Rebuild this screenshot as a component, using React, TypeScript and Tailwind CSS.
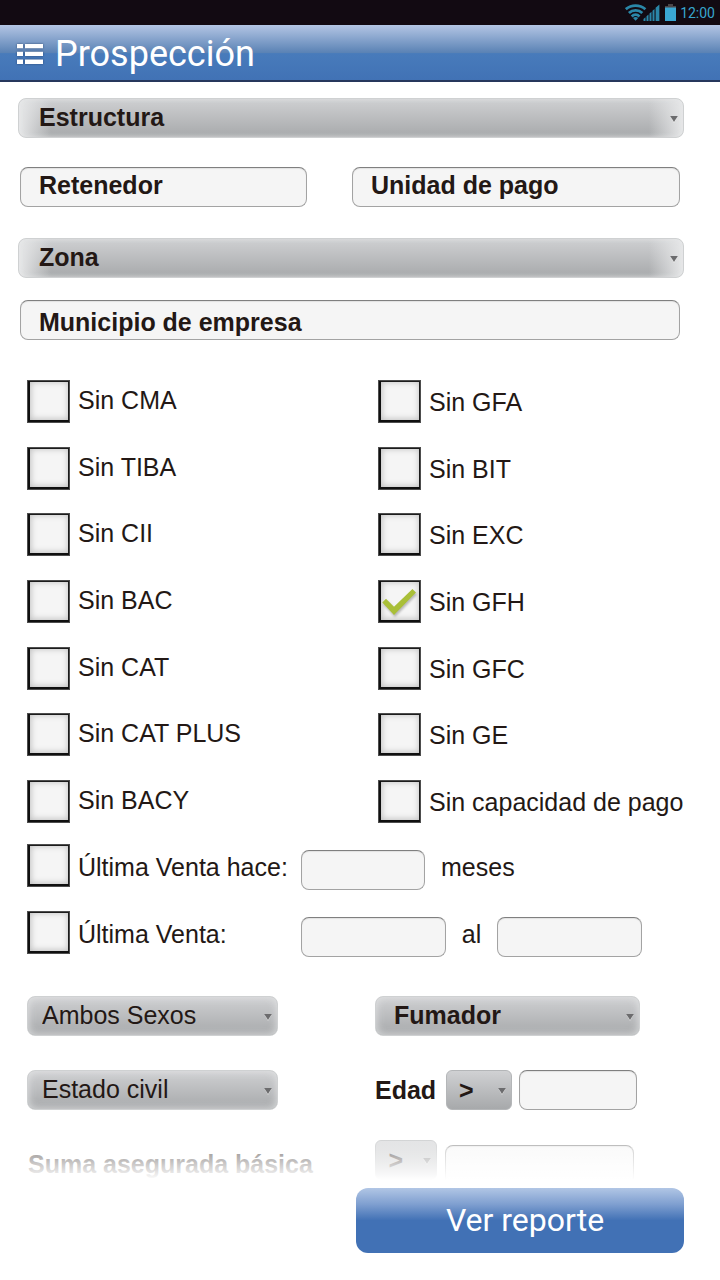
import { ReactNode, useId, useState } from 'react';

const INK = 'text-[#231815]';

const leftOptions = ['Sin CMA', 'Sin TIBA', 'Sin CII', 'Sin BAC', 'Sin CAT', 'Sin CAT PLUS', 'Sin BACY'];
const rightOptions = ['Sin GFA', 'Sin BIT', 'Sin EXC', 'Sin GFH', 'Sin GFC', 'Sin GE', 'Sin capacidad de pago'];

function StatusBar() {
  return (
    <div className="flex h-[25px] items-center justify-end bg-[#120a12] pr-[5px]">
      <svg className="h-[17px] w-[35px]" viewBox="0 0 35 17" fill="none" stroke="#2a87a8" strokeWidth="2.8" aria-hidden="true">
        <path d="M.8 5.2C6.4.4 14.8.4 20.4 5.2" />
        <path d="M3.9 8.9C7.6 5.4 13.6 5.4 17.3 8.9" />
        <path d="M6.7 12.4C9 10.2 12.2 10.2 14.5 12.4" />
        <path d="M8 13.9Q10.6 12.2 13.2 13.9L10.6 16.8Z" fill="#2a87a8" stroke="none" />
        <path
          d="M18.5 17v-2l2-1.8V17zM21.5 17v-4.7l2-1.8V17zM24.5 17V9.5l2-1.8V17zM27.5 17V6.7l2-1.8V17zM30.6 17V3.8L34.4.6V17z"
          fill="#2a87a8"
          stroke="none"
        />
      </svg>
      <svg className="ml-[5px] h-[17px] w-[11px]" viewBox="0 0 11 17" aria-hidden="true">
        <path d="M3 0h5v2h3v3H0V2h3z" fill="#4a4447" />
        <path d="M0 3.5h11V17H0z" fill="#3aa6d2" />
      </svg>
      <time className="ml-1 font-[Roboto,sans-serif] text-sm leading-none text-[#37a5cd]">12:00</time>
    </div>
  );
}

function Header() {
  return (
    <header className="flex h-[57px] items-center border-b-2 border-[#26375c] bg-[linear-gradient(to_bottom,#b3c5e4_0%,#5b83b5_50%,#487bbb_52%,#4172b5_100%)] pt-0.5 pl-4 text-white">
      <button type="button" aria-label="Menú" className="drop-shadow-[0_0_1px_rgba(30,50,90,0.7)]">
        <svg className="h-5 w-[27px]" viewBox="0 0 27 20" fill="currentColor" aria-hidden="true">
          <path d="M1 0h6v4.3H1zM9 0h18v4.3H9zM1 7.8h6v4.3H1zM9 7.8h18v4.3H9zM1 15.6h6V20H1zM9 15.6h18V20H9z" />
        </svg>
      </button>
      <h1 className="ml-3 font-[Roboto,sans-serif] text-4xl leading-none">Prospección</h1>
    </header>
  );
}

function Select({ name, label, className = '', look = 'normal', bold = true, pad = 'pl-[15px]' }: {
  name: string; label?: string; className?: string; look?: 'wide' | 'normal' | 'small'; bold?: boolean; pad?: string;
}) {
  const looks = {
    wide: 'rounded-lg border-[#cfd1d2] bg-[linear-gradient(to_right,#e6e7e8_0px,rgba(230,231,232,0)_32px,rgba(230,231,232,0)_calc(100%-34px),#e6e7e8_100%),linear-gradient(to_bottom,#cfd0d2,#a7a9ab)] shadow-[inset_0_0_5px_rgba(230,231,232,0.9)]',
    normal: 'rounded-lg border-[#cfd1d2] bg-[linear-gradient(to_bottom,#cfd0d2,#a7a9ab)] shadow-[inset_0_0_8px_rgba(230,231,232,0.9)]',
    small: 'rounded-md border-[#b4b6b8] bg-[linear-gradient(to_bottom,#d0d1d3,#a7a9ab)]',
  };
  return (
    <div className={`relative ${className}`}>
      <select
        aria-label={label ?? name}
        className={`block h-10 w-full appearance-none border pr-6 ${pad} ${looks[look]} ${bold ? 'font-bold' : ''} ${look === 'small' ? '' : 'pb-px'}`}
      >
        <option>{name}</option>
      </select>
      <svg className="pointer-events-none absolute top-[18px] right-[6px] h-[7px] w-[8px]" viewBox="0 0 8 7" aria-hidden="true">
        <path d="M.5 1h7L4 7z" fill="#fff" opacity=".6" />
        <path d="M.2 0h7.6L4 6z" fill="#6c6c6e" />
      </svg>
    </div>
  );
}

function Field({ label, hint, className = '' }: { label: string; hint?: string; className?: string }) {
  return (
    <input
      type="text"
      aria-label={label}
      placeholder={hint}
      className={`h-10 min-w-0 rounded-lg border border-[#a3a3a3] border-t-[#7f7f7f] bg-[#f5f5f5] px-[18px] font-bold shadow-[inset_0_1px_1px_rgba(0,0,0,0.08)] placeholder:text-[#231815] ${className}`}
    />
  );
}

function Check({ children, initial = false, labelClass = '' }: { children: ReactNode; initial?: boolean; labelClass?: string }) {
  const id = useId();
  const [on, setOn] = useState(initial);
  return (
    <div className="flex items-center gap-2">
      <span className="relative block size-[43px] shrink-0">
        <input
          id={id}
          type="checkbox"
          checked={on}
          onChange={() => setOn(!on)}
          className="block size-[43px] appearance-none border border-[#4d4d4d] bg-[#f5f5f5] shadow-[inset_2px_-2px_0_#101010,inset_-1px_1px_0_#1c1c1c,inset_1px_-1px_6px_2px_rgba(0,0,0,0.22)]"
        />
        {on && (
          <svg className="pointer-events-none absolute inset-0 size-[43px] drop-shadow-[1px_2px_1px_rgba(0,0,0,0.25)]" viewBox="0 0 43 43" aria-hidden="true">
            <path d="M4.3 22.4 8 18.7l8 8L34.4 9l3.6 3.6L16 35z" fill="#a9bf38" />
          </svg>
        )}
      </span>
      <label htmlFor={id} className={`whitespace-nowrap ${labelClass}`}>{children}</label>
    </div>
  );
}

export default function App() {
  return (
    <div className={`min-h-screen bg-white font-['Liberation_Sans',Arial,sans-serif] text-[25px] leading-[29px] ${INK}`}>
      <StatusBar />
      <Header />
      <main>
        <form onSubmit={(e) => e.preventDefault()}>
          <div className="relative h-[1098px] overflow-hidden pt-4">
            <div className="pr-9 pl-[18px]">
              <Select name="Estructura" look="wide" pad="pl-5" />
            </div>
            <div className="mt-[29px] grid grid-cols-[287fr_328fr] gap-[45px] pr-10 pl-5">
              <Field label="Retenedor" hint="Retenedor" className="pb-[3px]" />
              <Field label="Unidad de pago" hint="Unidad de pago" className="pb-[3px]" />
            </div>
            <div className="mt-[31px] pr-9 pl-[18px]">
              <Select name="Zona" look="wide" pad="pl-5" />
            </div>
            <div className="mt-[22px] flex pr-10 pl-5">
              <Field label="Municipio de empresa" hint="Municipio de empresa" className="flex-1 pt-[5px]" />
            </div>

            <div className="mt-10 grid h-[443px] grid-cols-[351fr_342fr] pl-[27px]">
              <div className="flex flex-col justify-between">
                {leftOptions.map((o) => <Check key={o} labelClass="pb-0.5">{o}</Check>)}
              </div>
              <div className="flex flex-col justify-between">
                {rightOptions.map((o) => (
                  <Check key={o} initial={o === 'Sin GFH'} labelClass="pt-0.5">{o}</Check>
                ))}
              </div>
            </div>

            <div className="mt-[21px] flex flex-col gap-6 pl-[27px]">
              <div className="flex h-[43px] items-start">
                <div className="w-[274px]"><Check labelClass="pt-1">Última Venta hace:</Check></div>
                <Field label="Meses desde la última venta" className="mt-1.5 w-[124px]" />
                <span className="mt-[9px] ml-4">meses</span>
              </div>
              <div className="flex h-[43px] items-start">
                <div className="w-[274px]"><Check labelClass="pt-1">Última Venta:</Check></div>
                <Field label="Última venta desde" className="mt-1.5 w-[145px]" />
                <span className="mt-[9px] w-[51px] text-center">al</span>
                <Field label="Última venta hasta" className="mt-1.5 w-[145px]" />
              </div>
            </div>

            <div className="mt-[42px] grid grid-cols-[348fr_345fr] items-center gap-y-[34px] pl-[27px]">
              <Select name="Ambos Sexos" bold={false} pad="pl-3.5" className="w-[251px]" />
              <Select name="Fumador" pad="pl-[18px]" className="w-[265px]" />
              <Select name="Estado civil" bold={false} pad="pl-3.5" className="w-[251px]" />
              <div className="flex items-center">
                <span className="w-[71px] font-bold">Edad</span>
                <Select name=">" label="Comparación de edad" look="small" pad="pl-3" className="w-[66px]" />
                <Field label="Edad" className="ml-[7px] w-[118px]" />
              </div>
            </div>
            <div className="mt-[30px] grid grid-cols-[348fr_345fr] items-center pl-[28px]">
              <span className="pt-1 font-bold">Suma asegurada básica</span>
              <div className="flex items-start">
                <Select name=">" label="Comparación de suma asegurada" look="small" pad="pl-3" className="w-[62px]" />
                <Field label="Suma asegurada básica" className="mt-[5px] ml-2 w-[189px]" />
              </div>
            </div>
            <div className="pointer-events-none absolute inset-x-0 bottom-0 h-[68px] bg-linear-to-b from-white/0 to-white" />
          </div>

          <div className="flex justify-end pt-2 pr-9 pb-7">
            <button
              type="submit"
              className="h-[65px] w-[328px] rounded-xl bg-[linear-gradient(to_bottom,#b1c6e5_0%,#7f9fd0_25%,#4171b5_50%,#4171b5_100%)] pb-0.5 pl-2.5 font-[Roboto,sans-serif] text-[32px] leading-none text-white"
            >
              Ver reporte
            </button>
          </div>
        </form>
      </main>
    </div>
  );
}
